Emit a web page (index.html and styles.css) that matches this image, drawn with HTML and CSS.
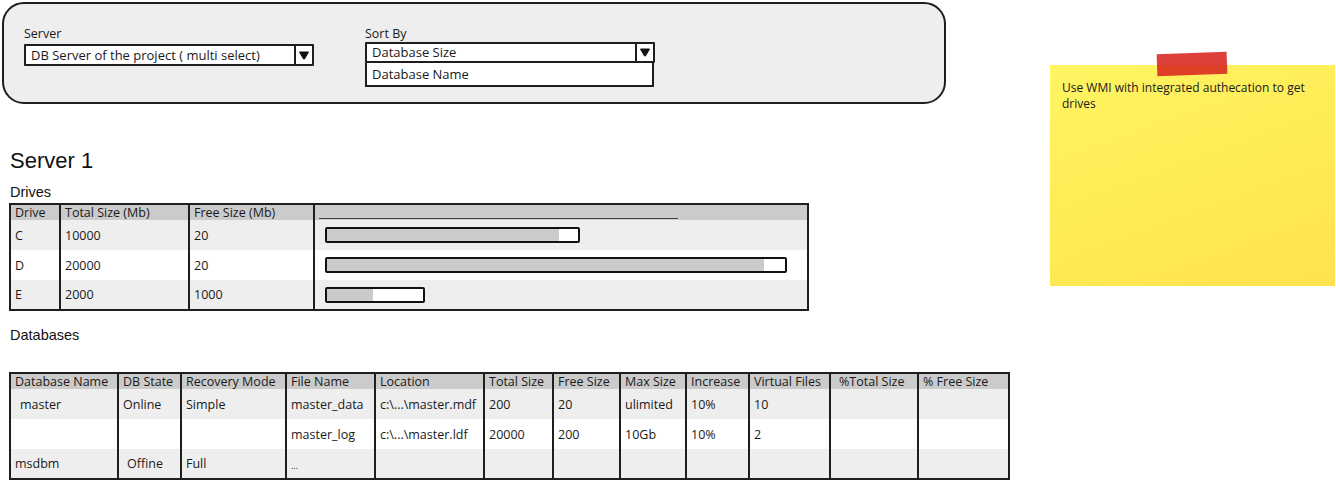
FILE: index.html
```html
<!DOCTYPE html>
<html>
<head>
<meta charset="utf-8">
<link rel="stylesheet" href="styles.css">
</head>
<body>
<div class="page">
  <div class="main">
    <div class="panel">
      <div class="field">
        <div class="label">Server</div>
        <div class="select server-select">
          <span class="sel-text">DB Server of the project ( multi select)</span>
          <span class="arrow"><svg width="10" height="9" viewBox="0 0 10 9"><path d="M0.5 1 L9.5 1 L5.5 8 L4.5 8 Z" fill="#111" stroke="#111" stroke-width="1" stroke-linejoin="round"/></svg></span>
        </div>
      </div>
      <div class="field sort-field">
        <div class="label">Sort By</div>
        <div class="select sort-select">
          <span class="sel-text">Database Size</span>
          <span class="arrow"><svg width="10" height="9" viewBox="0 0 10 9"><path d="M0.5 1 L9.5 1 L5.5 8 L4.5 8 Z" fill="#111" stroke="#111" stroke-width="1" stroke-linejoin="round"/></svg></span>
        </div>
        <div class="list">Database Name</div>
      </div>
    </div>

    <h1 class="title">Server 1</h1>
    <h2 class="subtitle">Drives</h2>
    <table class="grid drives">
      <colgroup>
        <col class="c-drive"><col class="c-total"><col class="c-free"><col class="c-bar">
      </colgroup>
      <tr class="head">
        <th>Drive</th><th>Total Size (Mb)</th><th>Free Size (Mb)</th><th><span class="head-line"></span></th>
      </tr>
      <tr class="odd">
        <td>C</td><td>10000</td><td>20</td>
        <td><div class="bar" style="width:255px"><div class="fill" style="width:232px"></div></div></td>
      </tr>
      <tr class="even">
        <td>D</td><td>20000</td><td>20</td>
        <td><div class="bar" style="width:462px"><div class="fill" style="width:437px"></div></div></td>
      </tr>
      <tr class="odd">
        <td>E</td><td>2000</td><td>1000</td>
        <td><div class="bar" style="width:100px"><div class="fill" style="width:46px"></div></div></td>
      </tr>
    </table>

    <h2 class="subtitle db-title">Databases</h2>
    <table class="grid dbs">
      <colgroup>
        <col style="width:108px"><col style="width:63px"><col style="width:105px"><col style="width:89px">
        <col style="width:109px"><col style="width:69px"><col style="width:67px"><col style="width:66px">
        <col style="width:63px"><col style="width:81px"><col style="width:88px"><col style="width:91px">
      </colgroup>
      <tr class="head">
        <th>Database Name</th><th>DB State</th><th>Recovery Mode</th><th>File Name</th><th>Location</th>
        <th>Total Size</th><th>Free Size</th><th>Max Size</th><th>Increase</th><th>Virtual Files</th>
        <th class="indent">%Total Size</th><th>% Free Size</th>
      </tr>
      <tr class="odd">
        <td class="indent">master</td><td>Online</td><td>Simple</td><td>master_data</td><td>c:\...\master.mdf</td>
        <td>200</td><td>20</td><td>ulimited</td><td>10%</td><td>10</td><td></td><td></td>
      </tr>
      <tr class="even">
        <td></td><td></td><td></td><td>master_log</td><td>c:\...\master.ldf</td>
        <td>20000</td><td>200</td><td>10Gb</td><td>10%</td><td>2</td><td></td><td></td>
      </tr>
      <tr class="odd">
        <td>msdbm</td><td class="indent2">Offine</td><td>Full</td><td class="dots">...</td><td></td>
        <td></td><td></td><td></td><td></td><td></td><td></td><td></td>
      </tr>
    </table>
  </div>

  <div class="note">
    <div class="tape"></div>
    <p class="note-text">Use WMI with integrated authecation to get drives</p>
  </div>
</div>
</body>
</html>
```

FILE: styles.css
```css
* { box-sizing: border-box; }
html, body { margin: 0; padding: 0; background: #fff; }
body {
  font-family: "Open Sans", Lato, sans-serif;
  font-size: 12px;
  color: #1a1a1a;
}
.page {
  display: flex;
  align-items: flex-start;
  width: 1336px;
  height: 482px;
  overflow: hidden;
}
.main {
  width: 1010px;
  padding-top: 2px;
}

/* top panel */
.panel {
  margin-left: 2px;
  width: 944px;
  height: 102px;
  border: 2px solid #1e1e1e;
  border-radius: 22px;
  background: #eeeeee;
  display: flex;
  gap: 51px;
  padding: 22px 0 0 20px;
}
.field { width: 290px; }
.label {
  font-size: 12.5px;
  line-height: 15px;
  margin-bottom: 3px;
}
.select {
  display: flex;
  height: 22px;
  border: 2px solid #1e1e1e;
  background: #fff;
  border-radius: 1px;
}
.sel-text {
  flex: 1;
  padding-left: 5px;
  line-height: 18px;
  font-size: 13px;
  white-space: nowrap;
  overflow: hidden;
}
.arrow {
  width: 18px;
  border-left: 2px solid #1e1e1e;
  display: flex;
  align-items: center;
  justify-content: center;
}
.sort-field .label { margin-bottom: 1px; }
.sort-select { height: 21px; }
.sort-select .sel-text { line-height: 17px; }
.list {
  width: 289px;
  height: 24px;
  border: 2px solid #1e1e1e;
  border-top: none;
  background: #fff;
  padding-left: 5px;
  line-height: 23px;
  font-size: 13px;
}

/* headings */
.title {
  margin: 44px 0 0 10px;
  font-family: "Liberation Sans", Arial, sans-serif;
  font-weight: normal;
  font-size: 22px;
  line-height: 26px;
  color: #111;
}
.subtitle {
  margin: 9px 0 0 10px;
  font-family: "Liberation Sans", Arial, sans-serif;
  font-weight: normal;
  font-size: 14.5px;
  line-height: 18px;
  color: #111;
}
.db-title { margin-top: 15px; }

/* tables */
.grid {
  margin-left: 9px;
  border-collapse: collapse;
  border: 2px solid #1e1e1e;
  table-layout: fixed;
}
.grid th, .grid td {
  border-left: 2px solid #1e1e1e;
  border-right: 2px solid #1e1e1e;
  padding: 0 0 0 4px;
  text-align: left;
  font-weight: normal;
  white-space: nowrap;
  overflow: hidden;
  font-size: 12.5px;
  vertical-align: middle;
}
.grid tr.head { background: #cbcbcb; height: 16px; }
.grid tr.head th { line-height: 15px; height: 16px; }
.grid tr.odd { background: #eeeeee; height: 30px; }
.grid tr.even { background: #ffffff; height: 30px; }
.grid td { height: 30px; }

.drives { width: 798px; margin-top: 2px; }
.c-drive { width: 50px; }
.c-total { width: 129px; }
.c-free { width: 125px; }
.c-bar { width: 494px; }

.head-line {
  display: block;
  width: 359px;
  height: 13px;
  border-bottom: 1px solid #444;
  margin-bottom: 0;
}
.bar {
  height: 16px;
  margin-left: 6px;
  border: 2px solid #111;
  border-radius: 2px;
  background: #fff;
  overflow: hidden;
}
.fill {
  height: 100%;
  background: #cbcbcb;
}

.dbs { width: 1000px; margin-top: 28px; }
.dbs td.indent { padding-left: 9px; }
.dbs th.indent { padding-left: 8px; }
.dbs td.indent2 { padding-left: 8px; }
.dbs td.dots { font-size: 9px; vertical-align: bottom; padding-bottom: 6px; }

/* sticky note */
.note {
  position: relative;
  margin-top: 65px;
  margin-left: 40px;
  width: 285px;
  height: 221px;
  background: linear-gradient(160deg, #fff563 0%, #ffed58 40%, #ffe24f 100%);
  padding: 12px 12px;
}
.tape {
  position: absolute;
  left: 107px;
  top: -12px;
  width: 70px;
  height: 22px;
  background: rgba(218, 38, 32, 0.88);
  transform: rotate(-2deg);
}
.note-text {
  margin: 3px 0 0 0;
  font-size: 12px;
  line-height: 16px;
  color: #1a1a1a;
}
```
